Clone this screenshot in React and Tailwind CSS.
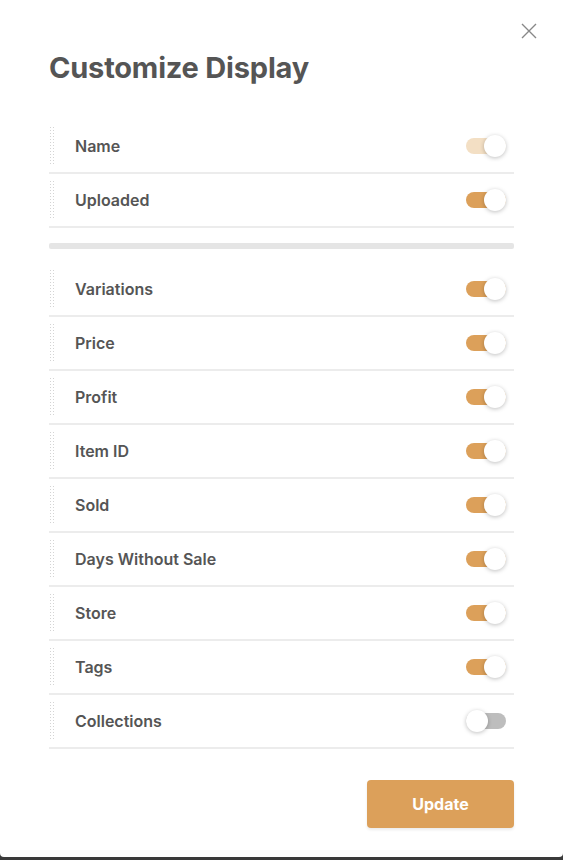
import { useState } from "react";

const topFields = [
  { key: "name", label: "Name", on: true, locked: true },
  { key: "uploaded", label: "Uploaded", on: true },
];

const bottomFields = [
  { key: "variations", label: "Variations", on: true },
  { key: "price", label: "Price", on: true },
  { key: "profit", label: "Profit", on: true },
  { key: "itemId", label: "Item ID", on: true },
  { key: "sold", label: "Sold", on: true },
  { key: "days", label: "Days Without Sale", on: true },
  { key: "store", label: "Store", on: true },
  { key: "tags", label: "Tags", on: true },
  { key: "collections", label: "Collections", on: false },
];

const Toggle = ({ on, locked, onClick }) => (
  <button
    onClick={locked ? undefined : onClick}
    className="relative w-[40px] h-[16px] mr-[8px] flex items-center"
  >
    <span
      className={`absolute inset-0 rounded-full ${
        on ? (locked ? "bg-[#f3dfc4]" : "bg-[#dca05a]") : "bg-[#bdbdbd]"
      }`}
    />
    <span
      className={`absolute top-[-3px] w-[22px] h-[22px] rounded-full bg-white shadow-[0_1px_4px_rgba(0,0,0,0.25)] ${
        on ? "left-[18px]" : "left-0"
      }`}
    />
  </button>
);

const Handle = () => (
  <div className="w-[6px] self-stretch my-[6px] bg-[radial-gradient(#d4d4d4_0.8px,transparent_0.9px)] bg-[length:3px_3px]" />
);

const Row = ({ field, onToggle }) => (
  <div className="flex items-center h-[54px] border-b-2 border-[#ececec]">
    <Handle />
    <span className="ml-[20px] flex-1 text-[16px] font-semibold text-[#555]">{field.label}</span>
    <Toggle on={field.on} locked={field.locked} onClick={onToggle} />
  </div>
);

const App = () => {
  const [top, setTop] = useState(topFields);
  const [bottom, setBottom] = useState(bottomFields);

  const flip = (list, setList, key) =>
    setList(list.map((f) => (f.key === key ? { ...f, on: !f.on } : f)));

  return (
    <div className="h-[860px] bg-[#3a3a3a] font-['Inter',sans-serif]">
      <div className="relative h-[857px] bg-white rounded-b-[4px] px-[49px] pt-[52px]">
        <button className="absolute top-[23px] right-[26px] text-[#888]">
          <svg width="16" height="16" viewBox="0 0 16 16" fill="none" stroke="currentColor" strokeWidth="1.4">
            <path d="M1 1L15 15M15 1L1 15" />
          </svg>
        </button>

        <h1 className="text-[29px] leading-[32px] font-bold text-[#555] tracking-[-0.2px]">Customize Display</h1>

        <div className="mt-[36px]">
          {top.map((f) => (
            <Row key={f.key} field={f} onToggle={() => flip(top, setTop, f.key)} />
          ))}
        </div>

        <div className="h-[6px] bg-[#e5e5e5] rounded-[2px] mt-[15px] mb-[14px]" />

        <div>
          {bottom.map((f) => (
            <Row key={f.key} field={f} onToggle={() => flip(bottom, setBottom, f.key)} />
          ))}
        </div>

        <div className="flex justify-end mt-[31px]">
          <button className="w-[147px] h-[48px] rounded-[4px] bg-[#dca05a] text-white text-[16px] font-bold shadow-[0_2px_3px_rgba(0,0,0,0.08)]">
            Update
          </button>
        </div>
      </div>
    </div>
  );
};

export default App;
